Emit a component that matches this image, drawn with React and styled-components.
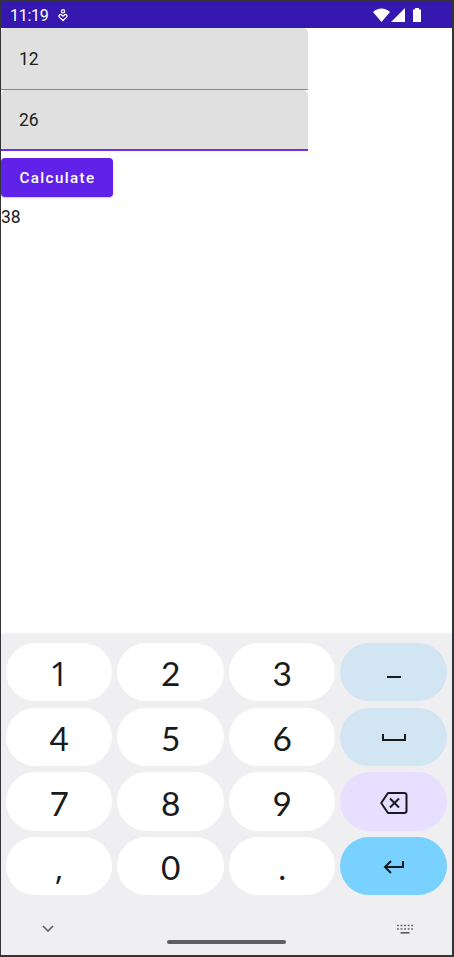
import React from "react";
import styled, { createGlobalStyle } from "styled-components";

const GlobalStyle = createGlobalStyle`
  * { box-sizing: border-box; }
  body { margin: 0; background: #fff; }
`;

const Device = styled.main`
  width: 454px;
  height: 957px;
  display: flex;
  flex-direction: column;
  overflow: hidden;
  border: solid #333338;
  border-width: 2px 2px 2px 1px;
  background: #fff;
  color: #202020;
  font-family: Roboto, sans-serif;
`;

const StatusBar = styled.header`
  flex: 0 0 26px;
  display: flex;
  align-items: center;
  padding: 1px 30px 0 9px;
  background: #3418b0;
  color: #fff;
  font-size: 16px;
  line-height: 24px;
`;

const Clock = styled.span`
  width: 48px;
  font-weight: 400;
  letter-spacing: -0.3px;
`;

const StatusIcons = styled.div`
  display: flex;
  margin-left: auto;
`;

const Content = styled.section`
  flex: 1;
  display: flex;
  flex-direction: column;
  align-items: flex-start;
`;

const Field = styled.input`
  display: block;
  width: 307px;
  height: ${(p) => (p.$focused ? 61 : 62)}px;
  padding: 0 18px;
  border: 0;
  border-bottom: ${(p) => (p.$focused ? "2px solid #7130e5" : "1px solid #858585")};
  border-radius: 5px 5px 0 0;
  outline: 0;
  background: #e0e0e0;
  color: #202020;
  font: 17.5px Roboto, sans-serif;
`;

const CalculateButton = styled.button`
  width: 112px;
  height: 39px;
  margin-top: 7px;
  padding: 1px 0 0 1px;
  border: 0;
  border-radius: 4px;
  background: #6021e8;
  box-shadow: 0 1px 2px #0003;
  color: #fff;
  font: 500 15.2px Roboto, sans-serif;
  letter-spacing: 1.4px;
`;

const Result = styled.output`
  margin-top: 8px;
  font-size: 17.5px;
  line-height: 24px;
`;

const Keyboard = styled.section`
  flex: 0 0 321px;
  display: flex;
  flex-direction: column;
  background: #efeff1;
  box-shadow: 0 -1px 2px #0000000d;
`;

const KeyGrid = styled.div`
  display: grid;
  grid-template-columns: repeat(4, 106.4px);
  grid-template-rows: repeat(4, 58.4px);
  gap: 6.3px 5.1px;
  padding: 9px 4px 0 5px;
`;

const keyColors = { number: "#fff", symbol: "#d2e5f3", erase: "#e6dfff", enter: "#78d1ff" };

const Key = styled.button`
  display: flex;
  align-items: center;
  justify-content: center;
  padding: ${(p) => (p.$tone === "number" ? "2px 0 0" : "2px 0 0")};
  border: 0;
  border-radius: 30px;
  background: ${(p) => keyColors[p.$tone]};
  color: #171b1e;
  font: 33.5px ${(p) => (p.$face === "plain" ? '"Open Sans"' : "Lato")}, sans-serif;
`;

const Navigation = styled.footer`
  flex: 1;
  display: grid;
  grid-template-columns: 94px 1fr 94px;
  align-items: center;
  justify-items: center;
  padding-top: 7px;
  color: #606164;
`;

const HomeHandle = styled.span`
  width: 119px;
  height: 4px;
  margin-top: 26px;
  border-radius: 2px;
  background: #5f5f61;
`;

const Icon = styled.svg`
  display: block;
  fill: none;
  stroke: currentColor;
  stroke-width: ${(p) => p.$weight || 2};
`;

const CareIcon = () => (
  <Icon width="10" height="14" viewBox="0 0 10 14" $weight={1.3} aria-hidden="true">
    <circle cx="5" cy="2.3" r="1.6" />
    <path d="M5 11.5 1.4 8.1C.2 6.7 1.7 4.9 3.4 5.7L5 7.2l1.6-1.5C8.3 4.9 9.8 6.7 8.6 8.1Z" />
  </Icon>
);

const SignalIcons = () => (
  <svg width="49" height="15" viewBox="0 0 49 15" fill="currentColor" aria-hidden="true">
    <path d="M0 4C4.7-.7 12.3-.7 17 4L8.5 14ZM18 14 32 0v14ZM40 1.5h2V0h4v1.5h2V14h-8Z" />
  </svg>
);

const MinusIcon = () => (
  <Icon width="16" height="12" viewBox="0 0 16 12" aria-hidden="true"><path d="M1 10h14" /></Icon>
);

const SpaceIcon = () => (
  <Icon width="26" height="8" viewBox="0 0 26 8" aria-hidden="true"><path d="M2 0v6h22V0" /></Icon>
);

const BackspaceIcon = () => (
  <Icon width="28" height="22" viewBox="0 0 28 22" aria-hidden="true">
    <path d="M8 1h16q2.5 0 2.5 2v16q0 2-2.5 2H8L1.2 11Z" strokeLinejoin="round" />
    <path d="m10 6.5 9 9m0-9-9 9" />
  </Icon>
);

const EnterIcon = () => (
  <Icon width="22" height="14" viewBox="0 0 22 14" aria-hidden="true">
    <path d="M20 1v6H2m6-6L2 7l6 6" />
  </Icon>
);

const ChevronIcon = () => (
  <Icon width="12" height="8" viewBox="0 0 12 8" $weight={1.6} aria-hidden="true"><path d="m1 1 5 5 5-5" /></Icon>
);

const KeyboardIcon = () => (
  <Icon width="18" height="10" viewBox="0 0 18 10" $weight={1.7} aria-hidden="true">
    <path d="M1 1.5h16M1 5h16" strokeDasharray="1.8 1.75" />
    <path d="M4.5 8.8h9" />
  </Icon>
);

const keys = [
  ["1", "number"], ["2", "number"], ["3", "number"], [<MinusIcon />, "symbol", "Minus"],
  ["4", "number"], ["5", "number"], ["6", "number"], [<SpaceIcon />, "symbol", "Space"],
  ["7", "number"], ["8", "number"], ["9", "number"], [<BackspaceIcon />, "erase", "Backspace"],
  [",", "number"], ["0", "number"], [".", "number"], [<EnterIcon />, "enter", "Enter"],
];

export default function App() {
  return (
    <Device>
      <GlobalStyle />
      <StatusBar><Clock>11:19</Clock><CareIcon /><StatusIcons><SignalIcons /></StatusIcons></StatusBar>
      <Content>
        <Field defaultValue="12" aria-label="First number" />
        <Field $focused defaultValue="26" aria-label="Second number" />
        <CalculateButton>Calculate</CalculateButton>
        <Result>38</Result>
      </Content>
      <Keyboard>
        <KeyGrid>
          {keys.map(([content, tone, label], index) => (
            <Key key={index} $tone={tone} $face={content === "1" || content === "," ? "plain" : "round"} aria-label={label}>{content}</Key>
          ))}
        </KeyGrid>
        <Navigation><ChevronIcon /><HomeHandle /><KeyboardIcon /></Navigation>
      </Keyboard>
    </Device>
  );
}
